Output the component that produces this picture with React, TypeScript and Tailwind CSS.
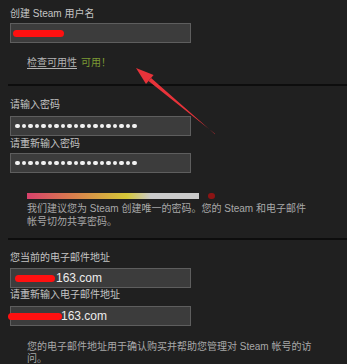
import React from "react";

const font = { fontFamily: '"Liberation Sans", "Noto Sans CJK SC", sans-serif' };

function Label({ children, className = "" }: { children: React.ReactNode; className?: string }) {
  return <div className={`text-[10px] leading-[14px] text-[#c4c4c4] ${className}`}>{children}</div>;
}

function Box({ children, className = "" }: { children?: React.ReactNode; className?: string }) {
  return (
    <div
      className={`flex h-[20px] w-[181px] items-center border border-[#5e5e5e] bg-[#3c3c3c] ${className}`}
    >
      {children}
    </div>
  );
}

function Dots() {
  return (
    <div className="flex gap-[2px] pl-[4px]">
      {Array.from({ length: 19 }).map((_, i) => (
        <span key={i} className="h-[4.5px] w-[4.5px] rounded-full bg-[#f2f2f2]" />
      ))}
    </div>
  );
}

function Scribble({ className = "" }: { className?: string }) {
  return <span className={`block h-[7px] rounded-full bg-[#ff1010] ${className}`} />;
}

function Separator({ className = "" }: { className?: string }) {
  return <div className={`ml-[8px] h-[2px] bg-[#0d0d0d] ${className}`} />;
}

export default function App() {
  return (
    <div className="relative h-[364px] w-[347px] overflow-hidden bg-[#202020]" style={font}>
      <div className="pl-[10px] pt-[7px]">
        <Label>创建 Steam 用户名</Label>
        <Box className="mt-[2px]">
          <Scribble className="ml-[2px] w-[51px]" />
        </Box>
        <div className="ml-[17px] mt-[13px] text-[10px] leading-[14px]">
          <span className="text-[#b4b4b4] underline underline-offset-2">检查可用性</span>
          <span className="ml-[4px] text-[#7c9a34]">可用！</span>
        </div>
      </div>

      <Separator className="mt-[14px]" />

      <div className="pl-[10px]">
        <Label className="mt-[12px]">请输入密码</Label>
        <Box className="mt-[4px]">
          <Dots />
        </Box>
        <Label className="mt-[1px]">请重新输入密码</Label>
        <Box className="mt-[2px]">
          <Dots />
        </Box>

        <div className="ml-[17px] mt-[20px] flex items-center">
          <div className="h-[6px] w-[172px] bg-[linear-gradient(to_right,#d8416c_0%,#d97a4e_25%,#d6c838_58%,#cbcbcb_72%,#cbcbcb_100%)]" />
          <span className="ml-[9px] h-[6px] w-[7px] rounded-full bg-[#8c1414] blur-[0.5px]" />
        </div>
        <div className="ml-[17px] mt-[3px] text-[10px] leading-[13px] text-[#a8a8a8]">
          我们建议您为 Steam 创建唯一的密码。您的 Steam 和电子邮件
          <br />
          帐号切勿共享密码。
        </div>
      </div>

      <Separator className="mt-[10px]" />

      <div className="pl-[10px]">
        <Label className="mt-[11px]">您当前的电子邮件地址</Label>
        <Box className="mt-[3px]">
          <Scribble className="ml-[4px] w-[40px]" />
          <span className="ml-[1px] text-[12px] text-[#ececec]">163.com</span>
        </Box>
        <Label className="mt-[0px]">请重新输入电子邮件地址</Label>
        <Box className="mt-[4px]">
          <Scribble className="ml-[-3px] w-[54px]" />
          <span className="ml-[-1px] text-[12px] text-[#ececec]">163.com</span>
        </Box>
        <div className="ml-[17px] mt-[15px] text-[10px] leading-[12px] text-[#a8a8a8]">
          您的电子邮件地址用于确认购买并帮助您管理对 Steam 帐号的访
          <br />
          问。
        </div>
      </div>

      <svg className="pointer-events-none absolute left-0 top-0" width="347" height="364" viewBox="0 0 347 364">
        <polygon points="215.3,134.4 214.7,133.6 148.5,81 151.1,78" fill="#e8333a" />
        <polygon points="136,68 153.6,74.9 146,84.1" fill="#e8333a" />
      </svg>
    </div>
  );
}
